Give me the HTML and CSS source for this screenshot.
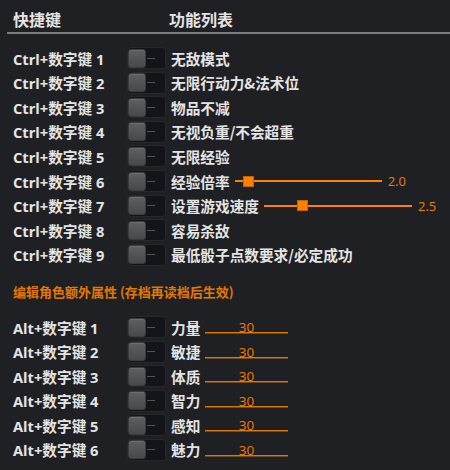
FILE: index.html
```html
<!DOCTYPE html>
<html lang="zh-CN">
<head>
<meta charset="utf-8">
<link rel="stylesheet" href="styles.css">
</head>
<body>
<div class="header">
  <span class="h-key">快捷键</span>
  <span class="h-func">功能列表</span>
</div>

<div class="rows">
  <div class="row"><span class="key">Ctrl+数字键 1</span><span class="tg"><span class="knob"></span><span class="dash"></span></span><span class="lbl">无敌模式</span></div>
  <div class="row"><span class="key">Ctrl+数字键 2</span><span class="tg"><span class="knob"></span><span class="dash"></span></span><span class="lbl">无限行动力&amp;法术位</span></div>
  <div class="row"><span class="key">Ctrl+数字键 3</span><span class="tg"><span class="knob"></span><span class="dash"></span></span><span class="lbl">物品不减</span></div>
  <div class="row"><span class="key">Ctrl+数字键 4</span><span class="tg"><span class="knob"></span><span class="dash"></span></span><span class="lbl">无视负重/不会超重</span></div>
  <div class="row"><span class="key">Ctrl+数字键 5</span><span class="tg"><span class="knob"></span><span class="dash"></span></span><span class="lbl">无限经验</span></div>
  <div class="row"><span class="key">Ctrl+数字键 6</span><span class="tg"><span class="knob"></span><span class="dash"></span></span><span class="lbl with-slider">经验倍率<span class="slider s1"><span class="track"></span><span class="thumb" style="left: 8px"></span></span><span class="val">2.0</span></span></div>
  <div class="row"><span class="key">Ctrl+数字键 7</span><span class="tg"><span class="knob"></span><span class="dash"></span></span><span class="lbl with-slider">设置游戏速度<span class="slider s2"><span class="track"></span><span class="thumb" style="left: 33px"></span></span><span class="val">2.5</span></span></div>
  <div class="row"><span class="key">Ctrl+数字键 8</span><span class="tg"><span class="knob"></span><span class="dash"></span></span><span class="lbl">容易杀敌</span></div>
  <div class="row"><span class="key">Ctrl+数字键 9</span><span class="tg"><span class="knob"></span><span class="dash"></span></span><span class="lbl">最低骰子点数要求/必定成功</span></div>
</div>

<div class="section">编辑角色额外属性 (存档再读档后生效)</div>

<div class="rows">
  <div class="row"><span class="key">Alt+数字键 1</span><span class="tg"><span class="knob"></span><span class="dash"></span></span><span class="lbl attr">力量<span class="field">30</span></span></div>
  <div class="row"><span class="key">Alt+数字键 2</span><span class="tg"><span class="knob"></span><span class="dash"></span></span><span class="lbl attr">敏捷<span class="field">30</span></span></div>
  <div class="row"><span class="key">Alt+数字键 3</span><span class="tg"><span class="knob"></span><span class="dash"></span></span><span class="lbl attr">体质<span class="field">30</span></span></div>
  <div class="row"><span class="key">Alt+数字键 4</span><span class="tg"><span class="knob"></span><span class="dash"></span></span><span class="lbl attr">智力<span class="field">30</span></span></div>
  <div class="row"><span class="key">Alt+数字键 5</span><span class="tg"><span class="knob"></span><span class="dash"></span></span><span class="lbl attr">感知<span class="field">30</span></span></div>
  <div class="row"><span class="key">Alt+数字键 6</span><span class="tg"><span class="knob"></span><span class="dash"></span></span><span class="lbl attr">魅力<span class="field">30</span></span></div>
</div>
</body>
</html>
```

FILE: styles.css
```css
* { box-sizing: border-box; }

html, body {
  margin: 0;
  padding: 0;
  background: #1f2023;
  width: 450px;
  height: 470px;
  overflow: hidden;
}

body {
  font-family: "Open Sans", "Noto Sans CJK SC", sans-serif;
  color: #e4e4e4;
  font-weight: 700;
}

.header {
  display: flex;
  align-items: flex-end;
  margin-left: 7px;
  height: 34px;
  padding: 0 0 3px 6px;
  border-bottom: 2px solid #7d7d7d;
  font-family: "Noto Sans CJK SC", sans-serif;
  font-size: 16px;
  line-height: 20px;
  font-weight: 700;
}

.h-key { width: 156px; }

.rows {
  padding-left: 13px;
  margin-top: 12px;
}

.row {
  display: grid;
  grid-template-columns: 109px 39px auto;
  column-gap: 5px;
  align-items: center;
  height: 24.55px;
}

.key {
  font-size: 14.67px;
  white-space: nowrap;
}

.lbl {
  font-family: "Noto Sans CJK SC", sans-serif;
  font-size: 14.67px;
  white-space: nowrap;
  display: flex;
  align-items: center;
}

.tg {
  position: relative;
  width: 39px;
  height: 22px;
  background: #121419;
  border: 1px solid #26282c;
  border-radius: 4px;
}

.knob {
  position: absolute;
  left: 0;
  top: 0.5px;
  width: 18px;
  height: 19px;
  border-radius: 3px;
  background: linear-gradient(#5d5f63, #47494d);
  border: 1px solid #3a3c40;
  box-shadow: inset 0 1px 0 #6c6e72;
}

.dash {
  position: absolute;
  left: 19px;
  top: 9.5px;
  width: 8px;
  height: 1px;
  background: #505256;
}

.slider {
  position: relative;
  display: block;
  height: 14px;
  margin-left: 5.5px;
}

.s1 { width: 147px; }
.s2 { width: 148px; }

.track {
  position: absolute;
  left: 0;
  right: 0;
  top: 6px;
  height: 2px;
  background: #ff8000;
}

.thumb {
  position: absolute;
  top: 1.5px;
  width: 11px;
  height: 11px;
  background: #ff8000;
  border: 1px solid #c86000;
}

.val {
  margin-left: 5.5px;
  font-family: "Open Sans", "Noto Sans CJK SC", sans-serif;
  font-weight: 400;
  font-size: 13px;
  color: #ee7d00;
}

.field {
  display: block;
  margin-left: 4.7px;
  width: 83px;
  height: 12px;
  line-height: 12px;
  text-align: center;
  border-bottom: 1px solid #e07800;
  box-shadow: 0 1px 0 rgba(224, 120, 0, 0.45);
  font-family: "Open Sans", "Noto Sans CJK SC", sans-serif;
  font-weight: 400;
  font-size: 13.5px;
  color: #ee7d00;
}

.section {
  margin-top: 17px;
  padding-left: 13px;
  font-family: "Noto Sans CJK SC", sans-serif;
  font-size: 13px;
  font-weight: 700;
  line-height: 16px;
  color: #e47800;
}

.section + .rows { margin-top: 15px; }
```
